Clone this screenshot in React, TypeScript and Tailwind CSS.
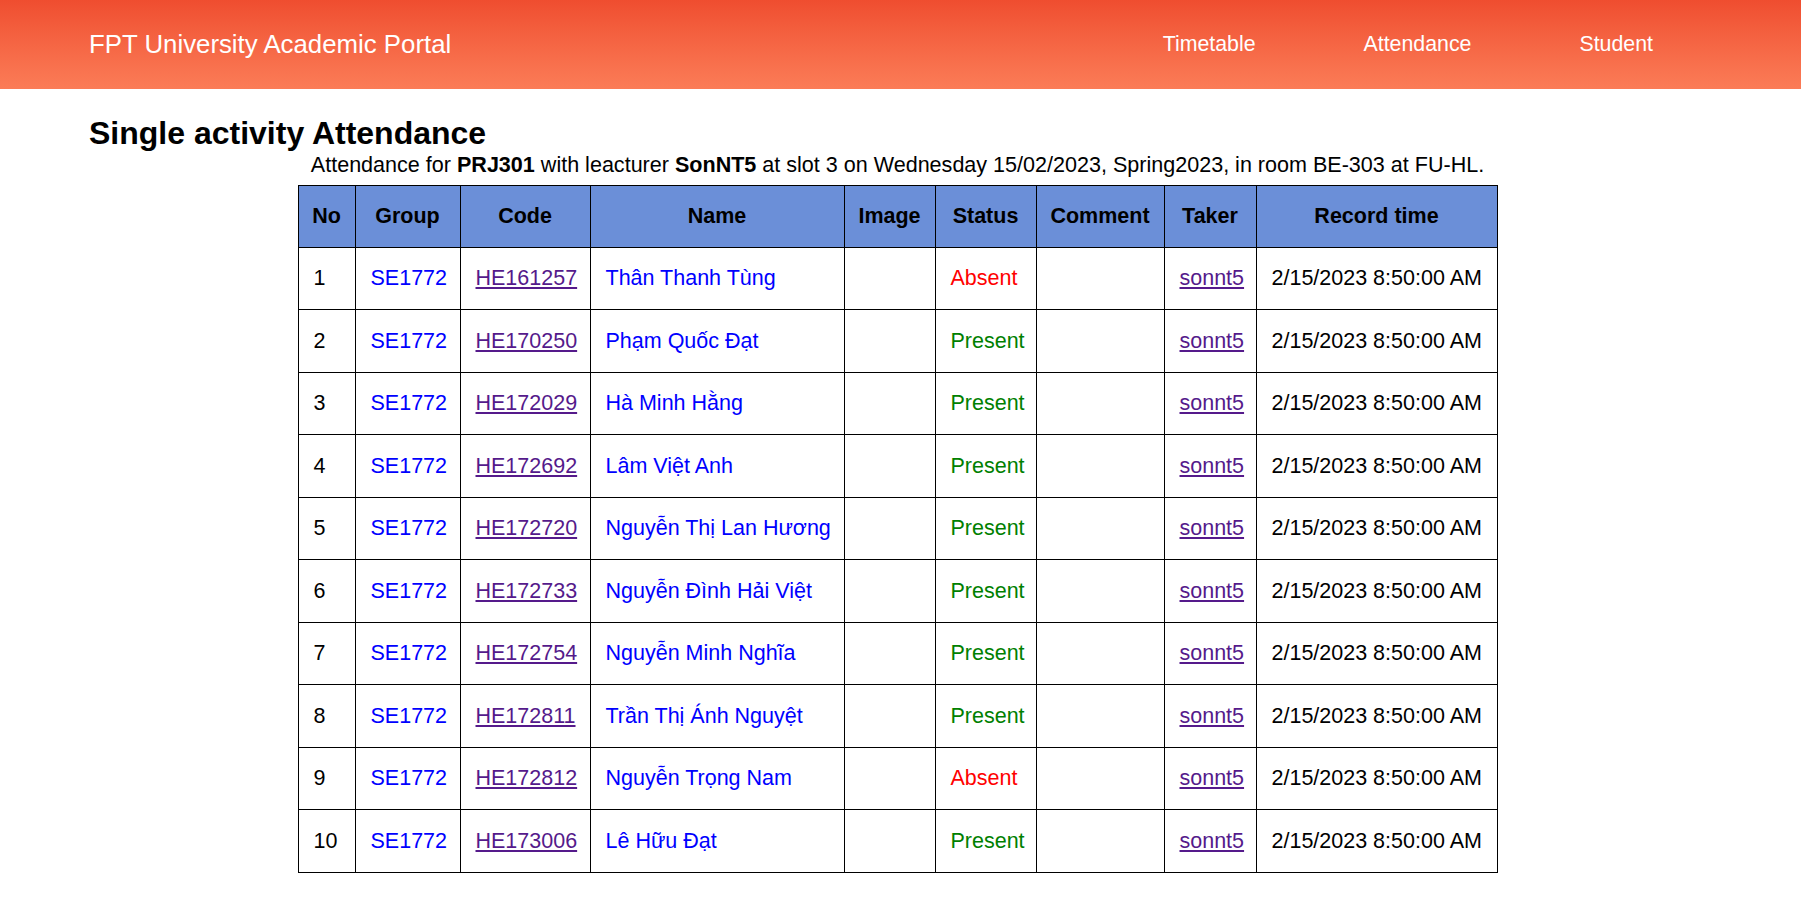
import React from "react";

const rows = [
  { code: "HE161257", name: "Thân Thanh Tùng", status: "Absent" },
  { code: "HE170250", name: "Phạm Quốc Đạt", status: "Present" },
  { code: "HE172029", name: "Hà Minh Hằng", status: "Present" },
  { code: "HE172692", name: "Lâm Việt Anh", status: "Present" },
  { code: "HE172720", name: "Nguyễn Thị Lan Hương", status: "Present" },
  { code: "HE172733", name: "Nguyễn Đình Hải Việt", status: "Present" },
  { code: "HE172754", name: "Nguyễn Minh Nghĩa", status: "Present" },
  { code: "HE172811", name: "Trần Thị Ánh Nguyệt", status: "Present" },
  { code: "HE172812", name: "Nguyễn Trọng Nam", status: "Absent" },
  { code: "HE173006", name: "Lê Hữu Đạt", status: "Present" },
];

const headers = ["No", "Group", "Code", "Name", "Image", "Status", "Comment", "Taker", "Record time"];

export default function App() {
  return (
    <div className="min-h-screen bg-white text-black font-['Liberation_Sans',Arial,sans-serif]">
      <header className="h-[89px] bg-gradient-to-b from-[#ef4d2f] to-[#fb7c57] flex items-center justify-between pl-[89px] pr-[148px] text-white">
        <div className="text-[25.8px] leading-none">FPT University Academic Portal</div>
        <nav className="flex gap-[108px] text-[21.33px] leading-none">
          <a className="text-white">Timetable</a>
          <a className="text-white">Attendance</a>
          <a className="text-white">Student</a>
        </nav>
      </header>
      <h1 className="mt-[26px] pl-[89px] text-[32px] leading-[37px] font-bold">Single activity Attendance</h1>
      <div className="pr-[6px]">
        <p className="mt-[1px] text-center text-[21.55px] leading-[24.5px]">
          Attendance for <b>PRJ301</b> with leacturer <b>SonNT5</b> at slot 3 on Wednesday 15/02/2023, Spring2023, in room BE-303 at FU-HL.
        </p>
        <table className="mt-[7px] mx-auto w-[1199px] table-fixed border-collapse border border-black text-[21.5px]">
          <colgroup>
            <col className="w-[57px]" />
            <col className="w-[105px]" />
            <col className="w-[130px]" />
            <col className="w-[254px]" />
            <col className="w-[91px]" />
            <col className="w-[101px]" />
            <col className="w-[128px]" />
            <col className="w-[92px]" />
            <col className="w-[241px]" />
          </colgroup>
          <thead>
            <tr className="h-[62px] bg-[#6b8fd8]">
              {headers.map((h) => (
                <th key={h} className="border border-black font-bold text-center align-middle whitespace-nowrap">
                  {h}
                </th>
              ))}
            </tr>
          </thead>
          <tbody>
            {rows.map((r, i) => (
              <tr key={r.code} className="h-[62.5px]">
                <td className="border border-black pl-[15px] align-middle">{i + 1}</td>
                <td className="border border-black pl-[15px] align-middle text-[#0000ff]">SE1772</td>
                <td className="border border-black pl-[15px] align-middle">
                  <a className="text-[#551a8b] underline">{r.code}</a>
                </td>
                <td className="border border-black pl-[15px] align-middle text-[#0000ff] whitespace-nowrap">{r.name}</td>
                <td className="border border-black"></td>
                <td className={"border border-black pl-[15px] align-middle " + (r.status === "Absent" ? "text-[#ff0000]" : "text-[#008000]")}>
                  {r.status}
                </td>
                <td className="border border-black"></td>
                <td className="border border-black pl-[15px] align-middle">
                  <a className="text-[#551a8b] underline">sonnt5</a>
                </td>
                <td className="border border-black pl-[15px] align-middle whitespace-nowrap">2/15/2023 8:50:00 AM</td>
              </tr>
            ))}
          </tbody>
        </table>
      </div>
    </div>
  );
}
